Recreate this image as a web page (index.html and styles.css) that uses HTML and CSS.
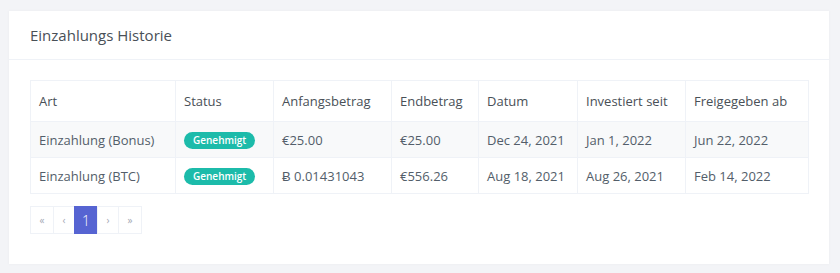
FILE: index.html
```html
<!DOCTYPE html>
<html lang="de">
<head>
<meta charset="utf-8">
<title>Einzahlungs Historie</title>
<link rel="stylesheet" href="styles.css">
</head>
<body>
<div class="page">
  <div class="card">
    <div class="card-header">
      <h4 class="card-title">Einzahlungs Historie</h4>
    </div>
    <div class="card-body">
      <table class="table">
        <colgroup>
          <col class="c1"><col class="c2"><col class="c3"><col class="c4"><col class="c5"><col class="c6"><col class="c7">
        </colgroup>
        <thead>
          <tr>
            <th>Art</th><th>Status</th><th>Anfangsbetrag</th><th>Endbetrag</th><th>Datum</th><th>Investiert seit</th><th>Freigegeben ab</th>
          </tr>
        </thead>
        <tbody>
          <tr class="striped">
            <td>Einzahlung (Bonus)</td>
            <td><span class="badge">Genehmigt</span></td>
            <td>€25.00</td>
            <td>€25.00</td>
            <td>Dec 24, 2021</td>
            <td>Jan 1, 2022</td>
            <td>Jun 22, 2022</td>
          </tr>
          <tr>
            <td>Einzahlung (BTC)</td>
            <td><span class="badge">Genehmigt</span></td>
            <td>Ƀ 0.01431043</td>
            <td>€556.26</td>
            <td>Aug 18, 2021</td>
            <td>Aug 26, 2021</td>
            <td>Feb 14, 2022</td>
          </tr>
        </tbody>
      </table>
      <ul class="pagination">
        <li class="page-item wide">«</li>
        <li class="page-item">‹</li>
        <li class="page-item wide active">1</li>
        <li class="page-item">›</li>
        <li class="page-item wide">»</li>
      </ul>
    </div>
  </div>
</div>
</body>
</html>
```

FILE: styles.css
```css
* { box-sizing: border-box; }
html, body { margin: 0; padding: 0; }
body {
  background: #f3f4f7;
  font-family: "Open Sans", "Liberation Sans", sans-serif;
  color: #535e6a;
  font-size: 13px;
}
.page {
  padding: 11px 11px 9px 9px;
}
.card {
  background: #ffffff;
  box-shadow: 0 0 3px rgba(0, 0, 0, 0.04);
  height: 253px;
}
.card-header {
  height: 49px;
  border-bottom: 1px solid #eff2f7;
  display: flex;
  align-items: center;
  padding: 0 21px 0 21px;
}
.card-title {
  margin: 0;
  font-size: 15px;
  font-weight: 400;
  color: #495057;
  padding-bottom: 1px;
}
.card-body {
  padding: 20px 21px 20px 21px;
}
.table {
  width: 778px;
  border-collapse: collapse;
  table-layout: fixed;
}
.c1 { width: 145px; }
.c2 { width: 98px; }
.c3 { width: 118px; }
.c4 { width: 87px; }
.c5 { width: 99px; }
.c6 { width: 108px; }
.c7 { width: 123px; }
.table th, .table td {
  border: 1px solid #eff2f7;
  text-align: left;
  padding: 0 8px;
  white-space: nowrap;
  font-weight: 400;
}
.table th {
  height: 41px;
  color: #495057;
}
.table td {
  height: 36px;
}
.striped td {
  background: #f8f9fa;
}
.badge {
  display: inline-block;
  background: #1cbbaa;
  color: #ffffff;
  font-size: 10px;
  font-weight: 600;
  line-height: 17px;
  height: 17px;
  padding: 0 9px;
  border-radius: 9px;
  vertical-align: middle;
}
.pagination {
  list-style: none;
  margin: 12px 0 0 0;
  padding: 0;
  display: flex;
}
.page-item {
  height: 28px;
  width: 22px;
  display: flex;
  align-items: center;
  justify-content: center;
  border: 1px solid #eff2f7;
  margin-left: -1px;
  color: #a3a8b4;
  font-size: 10px;
}
.page-item.wide { width: 24px; }
.page-item:first-child { margin-left: 0; }
.page-item.active {
  background: #5664d2;
  border-color: #5664d2;
  color: #ffffff;
  font-size: 14px;
  font-weight: 300;
}
```
